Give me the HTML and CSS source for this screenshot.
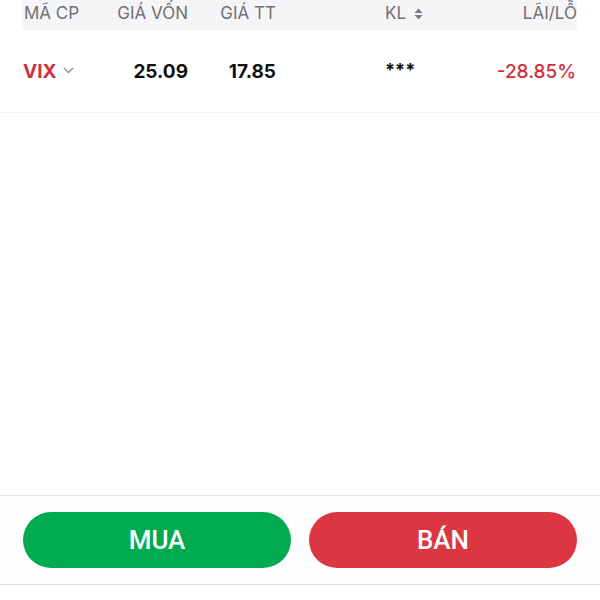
FILE: index.html
```html
<!DOCTYPE html>
<html lang="vi">
<head>
    <meta charset="UTF-8">
    <meta name="viewport" content="width=device-width, initial-scale=1.0">
    <title>Danh mục</title>
    <link rel="stylesheet" href="styles.css">
</head>
<body>
    <div class="page">
        <div class="table">
            <div class="thead">
                <span class="c1">MÃ CP</span>
                <span class="c2">GIÁ VỐN</span>
                <span class="c3">GIÁ TT</span>
                <span class="c4">KL
                    <svg class="sort" width="9" height="12" viewBox="0 0 9 12"><path d="M4.5 0.5 L8.5 5 H0.5 Z M4.5 11.5 L8.5 7 H0.5 Z" fill="#7a7a80"/></svg>
                </span>
                <span class="c5">LÃI/LỖ</span>
            </div>
            <div class="trow">
                <span class="c1 code">VIX
                    <svg class="chev" width="11" height="7" viewBox="0 0 11 7"><path d="M1 1 L5.5 5.5 L10 1" fill="none" stroke="#8a8a8f" stroke-width="1.3"/></svg>
                </span>
                <span class="c2 num">25.09</span>
                <span class="c3 num">17.85</span>
                <span class="c4 num">***</span>
                <span class="c5 loss">-28.85%</span>
            </div>
        </div>

        <div class="spacer"></div>

        <div class="actions">
            <button class="btn buy">MUA</button>
            <button class="btn sell">BÁN</button>
        </div>
        <div class="tabbar"></div>
    </div>
</body>
</html>
```

FILE: styles.css
```css
body {
    margin: 0;
    background: #fff;
    font-family: Inter, "Noto Sans", sans-serif;
    color: #111;
}
.page {
    height: 600px;
    display: flex;
    flex-direction: column;
}
.table {
    margin: 0 23px 0 22px;
}
.thead,
.trow {
    display: grid;
    grid-template-columns: 78px 88px 88px 1fr 1fr;
    align-items: center;
}
.thead {
    height: 30px;
    background: #f5f5f7;
    color: #707075;
    font-size: 17px;
    line-height: 20px;
    align-items: start;
    padding-top: 3px;
    box-sizing: border-box;
}
.trow {
    height: 82px;
    border-bottom: 1px solid #f1f1f3;
    margin: 0 -22px 0 -22px;
    padding: 0 23px 0 22px;
    font-size: 19px;
}
.c1 { padding-left: 2px; }
.trow .c1 { padding-left: 1px; }
.c2, .c3 { text-align: right; }
.c4 { padding-left: 109px; }
.c5 { text-align: right; }
.sort {
    margin-left: 3px;
    vertical-align: -1px;
}
.code {
    color: #d0303e;
    font-weight: 700;
    display: flex;
    align-items: center;
}
.chev {
    margin-left: 6px;
    margin-top: -2px;
}
.num {
    font-weight: 700;
}
.c4.num {
    font-size: 18px;
    margin-top: -3px;
}
.loss {
    color: #d0303e;
    font-weight: 500;
}
.spacer {
    flex: 1;
}
.actions {
    display: flex;
    gap: 18px;
    padding: 16px 23px;
    border-top: 1px solid #e8e8ea;
    border-bottom: 1px solid #dcdcde;
    background: #fdfdfd;
}
.btn {
    flex: 1;
    height: 56px;
    border: none;
    border-radius: 28px;
    color: #fff;
    font-family: Roboto, sans-serif;
    font-size: 26px;
    font-weight: 500;
}
.buy { background: #00aa50; }
.sell { background: #dc3642; }
.tabbar {
    height: 15px;
}
```
